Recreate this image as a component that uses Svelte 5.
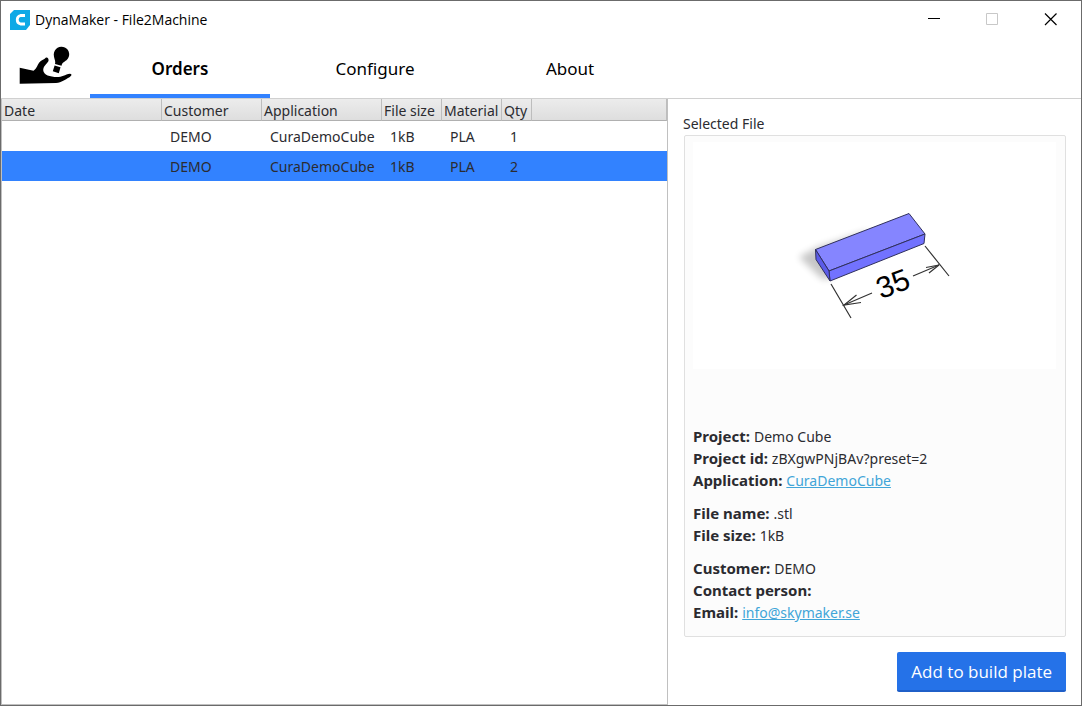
<script>
  const columns = [
    { key: 'date', label: 'Date', width: 160 },
    { key: 'customer', label: 'Customer', width: 100 },
    { key: 'application', label: 'Application', width: 120 },
    { key: 'size', label: 'File size', width: 60 },
    { key: 'material', label: 'Material', width: 60 },
    { key: 'qty', label: 'Qty', width: 30 }
  ];

  const orders = [
    { date: '', customer: 'DEMO', application: 'CuraDemoCube', size: '1kB', material: 'PLA', qty: 1 },
    { date: '', customer: 'DEMO', application: 'CuraDemoCube', size: '1kB', material: 'PLA', qty: 2 }
  ];

  const tabs = ['Orders', 'Configure', 'About'];

  const details = [
    [
      { label: 'Project:', value: 'Demo Cube' },
      { label: 'Project id:', value: 'zBXgwPNjBAv?preset=2' },
      { label: 'Application:', value: 'CuraDemoCube', href: '#application' }
    ],
    [
      { label: 'File name:', value: '.stl' },
      { label: 'File size:', value: '1kB' }
    ],
    [
      { label: 'Customer:', value: 'DEMO' },
      { label: 'Contact person:', value: '' },
      { label: 'Email:', value: 'info@skymaker.se', href: 'mailto:info@skymaker.se' }
    ]
  ];

  let activeTab = $state('Orders');
  let selected = $state(1);
</script>

<div class="window">
  <header class="titlebar">
    <svg class="app-icon" viewBox="0 0 20 20" aria-hidden="true">
      <path d="M4 0H20V15L16 20H0V4Z" fill="#0ea9e6" />
      <path d="M15 5.500H10.500A4.400 4.400 0 0 0 10.500 14H15" fill="none" stroke="#fff" stroke-width="2.800" />
    </svg>
    <span class="title">DynaMaker - File2Machine</span>
    <div class="controls">
      <button aria-label="Minimize">
        <svg viewBox="0 0 13 13"><path d="M0 5.500H12" stroke="#000" /></svg>
      </button>
      <button aria-label="Maximize" disabled>
        <svg viewBox="0 0 13 13"><path d="M.5.5H11.500V11.500H.5Z" fill="none" stroke="#c8c8c8" /></svg>
      </button>
      <button aria-label="Close">
        <svg viewBox="0 0 13 13"><path d="M1 .5 12.500 12M12.500 .5 1 12" stroke="#000" stroke-width="1.200" /></svg>
      </button>
    </div>
  </header>

  <nav class="tabs">
    <svg class="logo" viewBox="0 0 54 40" aria-hidden="true">
      <path d="M.7 21.800 14.500 24.800C18 22.500 18.500 18 21.500 15.300 23.500 13.600 25.500 13.400 26.700 11.700 28.500 11 30 12.800 29.500 15 28 18 24.500 19.500 24.200 24 24.500 29 31 31 38 31 43 31 46 28.500 51 27.700 53.500 28 52.500 30 50 31.500 46 33.500 43 36.500 37 37L.7 37.700Z" />
      <path d="M36 18C37 14.500 34.500 12 34.800 8A7.700 7.700 0 1 1 47.500 14.200C45 16 43.200 16.500 42.500 19.800Z" />
      <path d="M35.600 19.500 41.500 21.300 39.800 27.300 33.800 25.300Z" />
    </svg>
    {#each tabs as tab}
      <button class:active={tab === activeTab} onclick={() => (activeTab = tab)}>{tab}</button>
    {/each}
  </nav>

  <main>
    <section class="orders">
      <table>
        <colgroup>
          {#each columns as column}
            <col style="width: {column.width}px" />
          {/each}
          <col />
        </colgroup>
        <thead>
          <tr>
            {#each columns as column}
              <th scope="col">{column.label}</th>
            {/each}
            <th></th>
          </tr>
        </thead>
        <tbody>
          {#each orders as order, i}
            <tr class:selected={i === selected} onclick={() => (selected = i)}>
              {#each columns as column}
                <td>{order[column.key]}</td>
              {/each}
              <td></td>
            </tr>
          {/each}
        </tbody>
      </table>
    </section>

    <aside>
      <h2>Selected File</h2>
      <div class="card">
        <div class="preview">
          <svg viewBox="0 0 190 150" role="img" aria-label="Cube, 35 wide">
            <defs>
              <filter id="soft" x="-50%" y="-50%" width="200%" height="200%">
                <feGaussianBlur stdDeviation="3.500" />
              </filter>
            </defs>
            <path d="M19 67 38 57 90 40 50 89 42 89Z" fill="#000" opacity=".22" filter="url(#soft)" />
            <g stroke="#30305c" stroke-width="1" stroke-linejoin="round">
              <path d="M35.500 59.500 129 23.500 145 44 49 81Z" fill="#8585ff" />
              <path d="M49 81 145 44 144 53.500 50 91Z" fill="#7272ff" />
              <path d="M35.500 59.500 49 81 50 91 36 69.500Z" fill="#5b5be8" />
            </g>
            <g fill="none" stroke="#333" stroke-width="1.200">
              <path d="M51 94 71 128M145 56 169 86M92 103 64 115M133 86 159 75" />
              <path d="M76.500 105 64 115 81 112.500M146 77.500 159 75 149 83" />
            </g>
            <text x="113" y="104" text-anchor="middle" transform="rotate(-21 113 94)">35</text>
          </svg>
        </div>
        <div class="details">
          {#each details as group}
            <dl>
              {#each group as row}
                <div>
                  <dt>{row.label}</dt>
                  <dd>
                    {#if row.href}<a href={row.href}>{row.value}</a>{:else}{row.value}{/if}
                  </dd>
                </div>
              {/each}
            </dl>
          {/each}
        </div>
      </div>
      <button class="primary">Add to build plate</button>
    </aside>
  </main>
</div>

<style>
  :global(body) {
    margin: 0;
  }

  .window {
    box-sizing: border-box;
    display: flex;
    flex-direction: column;
    min-height: 100vh;
    border: 1px solid #6b6b6b;
    background: #fff;
    color: #2b2b30;
    font: 14px/22px 'Noto Sans', sans-serif;
  }

  button {
    padding: 0;
    border: 0;
    background: none;
    color: #000;
    font: inherit;
  }

  .titlebar {
    display: flex;
    align-items: center;
    height: 37px;
    padding: 0 2px 0 9px;
    color: #000;
    font-family: 'Open Sans', sans-serif;
  }

  .app-icon {
    width: 20px;
    height: 20px;
    margin-right: 5px;
  }

  .controls {
    display: flex;
    margin-left: auto;
  }

  .controls button {
    display: grid;
    place-items: center;
    width: 58px;
    height: 36px;
  }

  .controls svg {
    width: 13px;
    height: 13px;
  }

  .tabs {
    display: flex;
    height: 60px;
    border-bottom: 1px solid #d0d0d0;
  }

  .logo {
    width: 54px;
    height: 40px;
    margin: 8px 17px 0 18px;
  }

  .tabs button {
    box-sizing: border-box;
    width: 180px;
    margin-right: 15px;
    padding-top: 6px;
    border-bottom: 4px solid transparent;
    font-size: 17px;
  }

  .tabs button.active {
    border-color: #3282ff;
    font-weight: 600;
  }

  main {
    flex: 1;
    display: grid;
    grid-template-columns: minmax(0, 1fr) 413px;
  }

  .orders {
    border: 1px solid #c0c0c0;
    border-top: 0;
  }

  table {
    width: 100%;
    table-layout: fixed;
    border-collapse: separate;
    border-spacing: 0;
  }

  th {
    box-sizing: border-box;
    height: 22px;
    padding: 2px 0 0 2px;
    border-right: 1px solid #bdbdbd;
    border-bottom: 1px solid #b0b0b0;
    background: linear-gradient(#ececec, #dedede);
    font-weight: 400;
    line-height: 19px;
    text-align: left;
    white-space: nowrap;
  }

  td {
    box-sizing: border-box;
    height: 30px;
    padding: 2px 0 0 8px;
    white-space: nowrap;
  }

  .selected {
    background: #3282ff;
  }

  aside {
    display: flex;
    flex-direction: column;
    padding: 14px 15px 13px;
  }

  h2 {
    margin: 0;
    font-size: 14px;
    font-weight: 400;
  }

  .card {
    flex: 1;
    display: flex;
    flex-direction: column;
    justify-content: space-between;
    margin-left: 1px;
    border: 1px solid #e0e0e0;
    border-radius: 2px;
    background: #fcfcfc;
    padding: 6px 9px 12px 8px;
  }

  .preview {
    display: flex;
    justify-content: center;
    padding: 48px 0 29px;
    background: #fff;
  }

  .preview svg {
    width: 190px;
    height: 150px;
  }

  .preview text {
    fill: #000;
    font: 30px 'Liberation Sans', sans-serif;
  }

  .details {
    display: grid;
    gap: 11px;
  }

  dl,
  dd {
    margin: 0;
  }

  dl div {
    display: flex;
    gap: 4px;
    min-height: 22px;
  }

  dt {
    font-size: 15px;
    font-weight: 700;
    line-height: 20px;
  }

  a {
    color: #41a5d8;
  }

  .primary {
    align-self: flex-end;
    height: 40px;
    margin-top: 15px;
    padding: 2px 14px 0;
    border-bottom: 2px solid #1f5fc8;
    border-radius: 2px;
    background: #2572e8;
    color: #fff;
    font-family: 'Open Sans', sans-serif;
    font-size: 17px;
  }
</style>
